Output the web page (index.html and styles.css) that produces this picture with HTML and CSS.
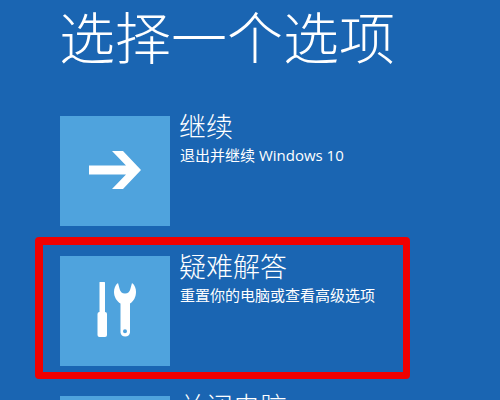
FILE: index.html
```html
<!DOCTYPE html>
<html lang="zh-CN">
<head>
<meta charset="utf-8">
<title>选择一个选项</title>
<link rel="stylesheet" href="styles.css">
</head>
<body>
<main class="screen">
  <h1 class="heading">选择一个选项</h1>
  <ul class="options">
    <li class="option">
      <div class="tile">
        <svg class="icon" viewBox="0 0 110 110"><polygon points="29,49.5 66,49.5 52,35 63,35 81,54 63,73 52,73 66,58.5 29,58.5"/></svg>
      </div>
      <div class="copy">
        <div class="name">继续</div>
        <div class="desc">退出并继续 Windows 10</div>
      </div>
    </li>
    <li class="option">
      <div class="tile">
        <svg class="icon" viewBox="0 0 110 110">
          <path d="M39.5 26.5Q39.5 26 40 26H44.5Q45 26 45 26.5V57H39.5Z"/>
          <rect x="37.5" y="56" width="9.5" height="25" rx="2"/>
          <path fill-rule="evenodd" d="M58 27C55 29 54 33 54 36C54 41 57 45.500 60.500 47.500V76.500A4.800 4.800 0 0 0 70 76.500V47.500C73.500 45.500 76 41 76 36C76 33 75 29 72 27L70.500 32.500C70 35.500 68 37.500 65 37.500C62 37.500 60 35.500 59.500 32.500ZM65 73.200A2 2 0 1 0 65 77.200A2 2 0 1 0 65 73.200Z"/>
        </svg>
      </div>
      <div class="copy">
        <div class="name">疑难解答</div>
        <div class="desc">重置你的电脑或查看高级选项</div>
      </div>
    </li>
    <li class="option">
      <div class="tile"></div>
      <div class="copy">
        <div class="name">关闭电脑</div>
      </div>
    </li>
  </ul>
  <div class="highlight"></div>
</main>
</body>
</html>
```
FILE: styles.css
```css
html, body {
  margin: 0;
  height: 100%;
  overflow: hidden;
}
.screen {
  position: relative;
  box-sizing: border-box;
  width: 500px;
  height: 400px;
  overflow: hidden;
  padding: 0 0 0 60px;
  background: #1a65b2;
  color: #fff;
  font-family: "Noto Sans CJK SC", "Noto Sans", sans-serif;
}
.heading {
  margin: 0 0 0 -1px;
  height: 116px;
  font-size: 56px;
  font-weight: 300;
  line-height: 70px;
}
.options {
  list-style: none;
  margin: 0;
  padding: 0;
  display: flex;
  flex-direction: column;
  gap: 30px;
}
.option {
  display: flex;
  gap: 10px;
}
.tile {
  flex: none;
  width: 110px;
  height: 110px;
  background: #4fa3dd;
}
.icon {
  display: block;
  width: 110px;
  height: 110px;
  fill: #fff;
}
.name {
  font-size: 27px;
  font-weight: 300;
  line-height: 24px;
  margin: -2px 0 0 -1px;
}
.desc {
  font-family: "Open Sans", "Noto Sans CJK SC", sans-serif;
  font-size: 15px;
  line-height: 20px;
  margin-top: 7px;
  white-space: nowrap;
  font-weight: 400;
}
.highlight {
  position: absolute;
  left: 35px;
  top: 237px;
  width: 375px;
  height: 142px;
  box-sizing: border-box;
  border-style: solid;
  border-color: #f00000;
  border-width: 8px 7px 7px 8px;
  border-radius: 4px;
}
```
